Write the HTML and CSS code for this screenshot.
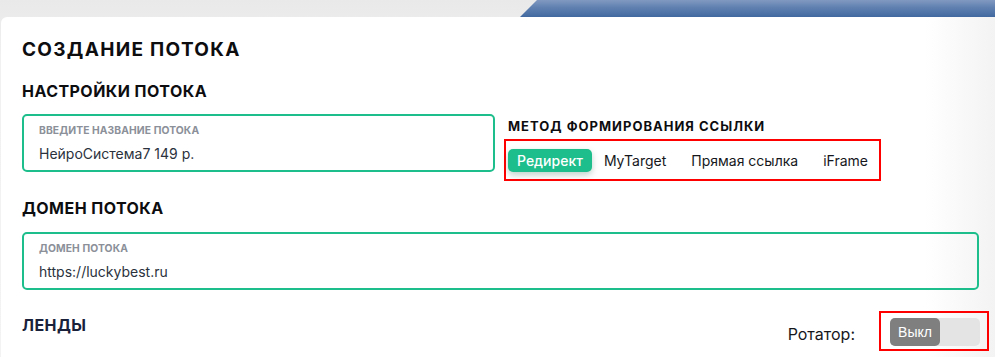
FILE: index.html
```html
<!DOCTYPE html>
<html lang="ru">
<head>
<meta charset="utf-8">
<title>Создание потока</title>
<link rel="stylesheet" href="styles.css">
</head>
<body>
<div class="top">
  <div class="top-blue"></div>
</div>
<main class="card">
  <h1 class="title">СОЗДАНИЕ ПОТОКА</h1>
  <h2 class="section">НАСТРОЙКИ ПОТОКА</h2>
  <div class="settings-row">
    <div class="field field-name">
      <div class="field-label">ВВЕДИТЕ НАЗВАНИЕ ПОТОКА</div>
      <div class="field-value">НейроСистема7 149 р.</div>
    </div>
    <div class="method">
      <h3 class="method-title">МЕТОД ФОРМИРОВАНИЯ ССЫЛКИ</h3>
      <div class="method-tabs">
        <span class="tab tab-active">Редирект</span>
        <span class="tab">MyTarget</span>
        <span class="tab">Прямая ссылка</span>
        <span class="tab">iFrame</span>
      </div>
    </div>
  </div>
  <h2 class="section section-domain">ДОМЕН ПОТОКА</h2>
  <div class="field field-domain">
    <div class="field-label">ДОМЕН ПОТОКА</div>
    <div class="field-value">https://luckybest.ru</div>
  </div>
  <div class="lands-row">
    <h2 class="section section-lands">ЛЕНДЫ</h2>
    <div class="rotator">
      <span class="rotator-label">Ротатор:</span>
      <div class="rotator-box">
        <div class="toggle"><span class="toggle-knob">Выкл</span></div>
      </div>
    </div>
  </div>
</main>
</body>
</html>
```
FILE: styles.css
```css
* { box-sizing: border-box; }
html, body { margin: 0; padding: 0; }
body {
  width: 995px;
  height: 357px;
  overflow: hidden;
  background: linear-gradient(to bottom, #e9e9e9, #f1f1f1 60px, #f3f3f3);
  font-family: Inter, "Noto Sans", sans-serif;
  color: #111;
}
.top {
  height: 17px;
  display: flex;
}
.top-blue {
  margin-left: 520px;
  flex: 1;
  background: linear-gradient(to bottom, #8199c0 0%, #5f80b0 45%, #4169a0 100%);
  clip-path: polygon(17px 0, 100% 0, 100% 100%, 0 100%);
}
.card {
  margin-left: 1px;
  height: 340px;
  background: linear-gradient(to right, #ffffff 0%, #ffffff 93%, #f3f3f3 100%);
  border-radius: 6px 0 0 0;
  padding: 21px 17px 0 21px;
}
.title {
  margin: 0;
  font-size: 19px;
  line-height: 24px;
  font-weight: 700;
  letter-spacing: 1.3px;
  color: #0d0d10;
}
.section {
  margin: 0;
  font-size: 16px;
  line-height: 20px;
  font-weight: 700;
  letter-spacing: 0.45px;
  color: #0d0d10;
}
.title + .section { margin-top: 19px; }
.settings-row {
  display: flex;
  margin-top: 13px;
  gap: 9px;
}
.field {
  border: 2px solid #1dbe8b;
  border-radius: 5px;
  height: 58px;
  padding: 8px 0 0 15px;
}
.field-name { width: 473px; flex: none; }
.field-domain { width: 957px; margin-top: 14px; }
.field-label {
  font-size: 10.3px;
  line-height: 12px;
  font-weight: 700;
  color: #8b9099;
  letter-spacing: 0.1px;
}
.field-value {
  margin-top: 9px;
  font-size: 14px;
  line-height: 18px;
  color: #2b323d;
}
.method { padding-top: 4px; }
.method-title {
  margin: 0 0 4px 4px;
  font-size: 13px;
  line-height: 17px;
  font-weight: 700;
  letter-spacing: 1px;
  color: #0d0d10;
}
.method-tabs {
  display: flex;
  align-items: center;
  border: 2px solid #ff0000;
  width: 377px;
  height: 42px;
  padding: 0 2px;
  white-space: nowrap;
}
.tab {
  font-size: 14px;
  line-height: 23px;
  height: 23px;
  padding: 0 10px;
  color: #16171c;
  margin-right: 3px;
  white-space: nowrap;
  flex: none;
}
.tab-active {
  background: #1dbe8b;
  color: #ffffff;
  border-radius: 5px;
  font-weight: 500;
  padding: 0 9px;
  box-shadow: 0 3px 6px rgba(0, 80, 50, 0.25);
  margin-right: 2px;
}
.tab:nth-child(3) { margin-left: 2px; }
.tab:nth-child(4) { margin-left: 2px; }
.section-domain { margin-top: 17px; }
.lands-row {
  display: flex;
  justify-content: space-between;
  align-items: flex-start;
  margin-top: 21px;
  margin-right: -11px;
}
.section-lands {
  margin-top: 4px;
  color: #19223a;
}
.rotator {
  display: flex;
  align-items: center;
  gap: 24px;
}
.rotator-label {
  font-size: 16px;
  color: #16171c;
  padding-top: 5px;
}
.rotator-box {
  border: 2px solid #ff0000;
  padding: 5px 7px 3px 9px;
}
.toggle {
  width: 90px;
  height: 28px;
  background: #e4e4e4;
  border-radius: 5px;
  display: flex;
}
.toggle-knob {
  width: 50px;
  height: 28px;
  background: #7f7f7f;
  border-radius: 5px;
  color: #ffffff;
  font-family: "Liberation Sans", Arial, sans-serif;
  font-size: 14px;
  line-height: 28px;
  text-align: center;
}
```
